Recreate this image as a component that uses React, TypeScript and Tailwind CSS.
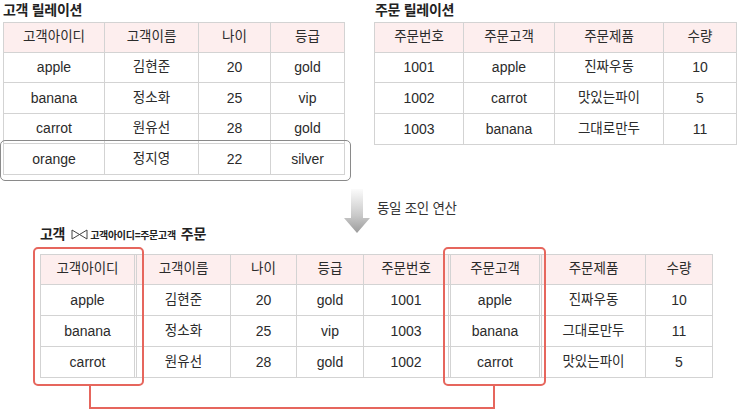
import clsx from 'clsx';

const HANGUL = /[가-힣]/;

type RelationProps = {
  cols: string;
  rows: string;
  head: string[];
  body: string[][];
  doubles?: number[];
};

// 릴레이션 표: 첫 줄은 헤더
function Relation({ cols, rows, head, body, doubles = [] }: RelationProps) {
  return (
    <div className={clsx('grid w-fit border-l border-t border-[#d3d3d3]', cols, rows)}>
      {[head, ...body].map((row, r) =>
        row.map((cell, c) => (
          <div
            key={`${r}-${c}`}
            className={clsx(
              'flex items-center justify-center border-b border-[#d3d3d3] text-[#2b2b2b]',
              doubles.includes(c) ? 'border-r-[3px] border-double' : 'border-r',
              r === 0 && 'bg-[#fdeeee]',
              HANGUL.test(cell) ? 'text-[13.5px]' : 'text-[14px]',
            )}
          >
            {cell}
          </div>
        )),
      )}
    </div>
  );
}

const customers = [
  ['apple', '김현준', '20', 'gold'],
  ['banana', '정소화', '25', 'vip'],
  ['carrot', '원유선', '28', 'gold'],
  ['orange', '정지영', '22', 'silver'],
];

const orders = [
  ['1001', 'apple', '진짜우동', '10'],
  ['1002', 'carrot', '맛있는파이', '5'],
  ['1003', 'banana', '그대로만두', '11'],
];

const joined = [
  ['apple', '김현준', '20', 'gold', '1001', 'apple', '진짜우동', '10'],
  ['banana', '정소화', '25', 'vip', '1003', 'banana', '그대로만두', '11'],
  ['carrot', '원유선', '28', 'gold', '1002', 'carrot', '맛있는파이', '5'],
];

function DownArrow() {
  return (
    <svg width="26" height="44" viewBox="0 0 26 44" className="mt-[14px] shrink-0">
      <defs>
        <linearGradient id="arrowFill" x1="0" y1="0" x2="0" y2="1">
          <stop offset="0" stopColor="#fbfbfb" />
          <stop offset="0.6" stopColor="#c9c9c9" />
          <stop offset="1" stopColor="#9c9c9c" />
        </linearGradient>
      </defs>
      <path d="M7 0 H19 V29 H26 L13 44 L0 29 H7 Z" fill="url(#arrowFill)" />
    </svg>
  );
}

function Bowtie() {
  return (
    <svg width="17" height="11" viewBox="0 0 17 11" className="shrink-0">
      <path d="M1 1 V10 L16 1 V10 Z" fill="none" stroke="#444" strokeWidth="1" strokeLinejoin="round" />
    </svg>
  );
}

export default function App() {
  return (
    <div className="h-[412px] w-[745px] overflow-hidden bg-white font-['Liberation_Sans','Noto_Sans_CJK_KR',sans-serif] text-[#222]">
      {/* 원본 릴레이션 */}
      <div className="flex items-start">
        <div className="relative ml-[3px]">
          <h2 className="h-[22px] text-[14px] font-bold leading-[20px] tracking-[-0.3px]">고객 릴레이션</h2>
          <Relation
            cols="grid-cols-[101px_94px_72px_74px]"
            rows="grid-rows-[30px_30px_31px_30px_31px]"
            head={['고객아이디', '고객이름', '나이', '등급']}
            body={customers}
          />
          <div className="absolute left-[-3px] top-[140px] h-[41px] w-[351px] rounded-[5px] border-[1.5px] border-[#8a8a8a]" />
        </div>
        <div className="ml-[29px]">
          <h2 className="h-[22px] pl-[1px] text-[14px] font-bold leading-[20px] tracking-[-0.3px]">주문 릴레이션</h2>
          <Relation
            cols="grid-cols-[89px_91px_109px_73px]"
            rows="grid-rows-[30px_30px_31px_31px]"
            head={['주문번호', '주문고객', '주문제품', '수량']}
            body={orders}
          />
        </div>
      </div>

      {/* 연산 표시 */}
      <div className="flex h-[72px]">
        <div className="flex w-[344px] items-end pb-[3px] pl-[40px]">
          <div className="flex h-[20px] items-center">
            <span className="text-[14px] font-bold tracking-[-0.3px]">고객</span>
            <span className="ml-[6px]">
              <Bowtie />
            </span>
            <span className="ml-[2px] mt-[2px] text-[10px] font-semibold tracking-[-0.3px]">고객아이디=주문고객</span>
            <span className="ml-[5px] text-[14px] font-bold tracking-[-0.3px]">주문</span>
          </div>
        </div>
        <DownArrow />
        <span className="ml-[7px] mt-[26px] text-[13.5px] leading-[16px] tracking-[-0.3px] text-[#333]">동일 조인 연산</span>
      </div>

      {/* 조인 결과 */}
      <div className="mt-[7px] pl-[40px]">
        <div className="relative w-fit">
          <Relation
            cols="grid-cols-[96px_94px_66px_67px_87px_91px_104px_67px]"
            rows="grid-rows-[30px_31px_31px_31px]"
            head={['고객아이디', '고객이름', '나이', '등급', '주문번호', '주문고객', '주문제품', '수량']}
            body={joined}
            doubles={[0, 4, 5]}
          />
          <div className="absolute left-[-7px] top-[-7px] h-[139px] w-[111px] rounded-[5px] border-2 border-[#e6665d]" />
          <div className="absolute left-[403px] top-[-7px] h-[139px] w-[103px] rounded-[5px] border-2 border-[#e6665d]" />
          <div className="absolute left-[49px] top-[131px] h-[24px] w-[406px] border-x-2 border-b-2 border-[#e6665d]" />
        </div>
      </div>
    </div>
  );
}
